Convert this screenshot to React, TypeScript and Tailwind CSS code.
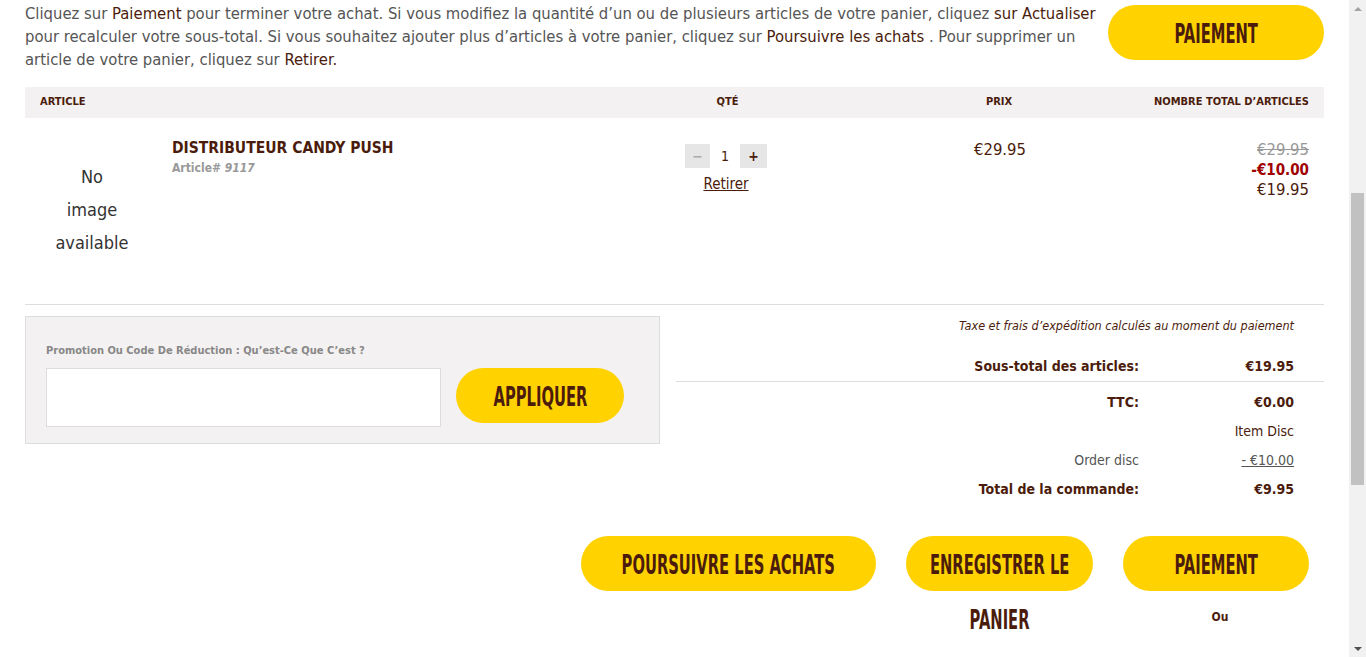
import type { ReactNode } from "react";

const FONT = "font-['Liberation_Sans_Narrow','DejaVu_Sans_Condensed','Liberation_Sans',sans-serif]";
const BROWN = "text-[#4b1c0c]";

// DIN-like condensed caps for the yellow buttons
function Pill({ children, className = "" }: { children: ReactNode; className?: string }) {
  return (
    <button
      className={`flex h-[55px] shrink-0 items-center justify-center rounded-full bg-[#ffd200] text-[26px] font-bold uppercase text-[#4b1c0c] ${className}`}
    >
      <span className="inline-block translate-y-[2px] scale-x-[0.63] whitespace-nowrap">{children}</span>
    </button>
  );
}

function SummaryRow({
  label,
  value,
  labelCls = "font-bold",
  valueCls = "font-bold",
}: {
  label: string;
  value: string;
  labelCls?: string;
  valueCls?: string;
}) {
  return (
    <div className="flex h-[29px] items-center text-[14px]">
      <div className={`w-[463px] text-right ${labelCls}`}>{label}</div>
      <div className={`w-[155px] text-right ${valueCls}`}>{value}</div>
    </div>
  );
}

function Scrollbar() {
  return (
    <div className="flex h-full w-[17px] shrink-0 flex-col items-center bg-[#f1f1f1]">
      <div className="flex h-[17px] items-center justify-center">
        <div className="h-0 w-0 border-x-[4px] border-b-[4px] border-x-transparent border-b-[#a3a3a3]" />
      </div>
      <div className="mt-[176px] h-[292px] w-[13px] bg-[#c1c1c1]" />
      <div className="flex-1" />
      <div className="flex h-[17px] items-center justify-center">
        <div className="h-0 w-0 border-x-[4px] border-t-[4px] border-x-transparent border-t-[#505050]" />
      </div>
    </div>
  );
}

export default function App() {
  return (
    <div className={`flex h-[657px] w-full overflow-hidden bg-white ${FONT} ${BROWN}`}>
      <div className="min-w-0 flex-1 px-[25px]">
        {/* intro + checkout button */}
        <div className="flex items-start gap-1">
          <p className="flex-1 pt-[2px] text-[16.5px] leading-[23px] text-[#555]">
            Cliquez sur <span className={BROWN}>Paiement</span> pour terminer votre achat. Si vous modifiez la
            quantité d’un ou de plusieurs articles de votre panier, cliquez{" "}
            <span className={BROWN}>sur Actualiser</span>
            <br />
            pour recalculer votre sous-total. Si vous souhaitez ajouter plus d’articles à votre panier, cliquez sur{" "}
            <span className={BROWN}>Poursuivre les achats</span> . Pour supprimer un
            <br />
            article de votre panier, cliquez sur <span className={BROWN}>Retirer.</span>
          </p>
          <Pill className="mt-[5px] w-[216px]">Paiement</Pill>
        </div>

        {/* table header */}
        <div className="mt-[16px] flex h-[31px] items-center bg-[#f3f1f1] px-[15px] text-[11px] font-bold uppercase">
          <div className="w-[625px]">Article</div>
          <div className="w-[125px] text-center">Qté</div>
          <div className="w-[290px] pl-[128px] text-center">Prix</div>
          <div className="flex-1 text-right">Nombre total d’articles</div>
        </div>

        {/* item row */}
        <div className="flex h-[187px] border-b border-[#dddddd] px-[15px] pt-[22px]">
          <div className="w-[104px] pt-[20px] text-center text-[18px] leading-[33px] text-[#333]">
            No
            <br />
            image
            <br />
            available
          </div>
          <div className="w-[541px] pl-[28px]">
            <div className="text-[15.5px] font-bold uppercase leading-[16px]">Distributeur Candy Push</div>
            <div className="mt-[3px] text-[12px] font-bold text-[#999]">
              Article# <span className="italic">9117</span>
            </div>
          </div>
          <div className="flex w-[82px] flex-col items-center pt-[4px]">
            <div className="flex h-[24px] text-[14px] font-bold">
              <span className="flex w-[25px] items-center justify-center bg-[#e6e6e6] text-[#aaa]">−</span>
              <span className="flex w-[30px] items-center justify-center bg-white font-normal">1</span>
              <span className="flex w-[27px] items-center justify-center bg-[#e6e6e6]">+</span>
            </div>
            <span className="mt-[5px] text-[15px] underline">Retirer</span>
          </div>
          <div className="w-[290px] pl-[207px] text-[16.5px] leading-[20px]">€29.95</div>
          <div className="flex flex-1 flex-col items-end text-[16.5px] leading-[20px]">
            <span className="text-[#999] line-through">€29.95</span>
            <span className="text-[15px] font-bold text-[#a00000]">-€10.00</span>
            <span>€19.95</span>
          </div>
        </div>

        {/* promo + summary */}
        <div className="mt-[11px] flex">
          <div className="h-[128px] w-[635px] shrink-0 border border-[#dddddd] bg-[#f3f1f1] px-[20px] pt-[26px]">
            <div className="text-[11px] font-bold text-[#888]">
              Promotion Ou Code De Réduction : Qu’est-Ce Que C’est ?
            </div>
            <div className="mt-[8px] flex items-start gap-[15px]">
              <input className="h-[59px] w-[395px] border border-[#dddddd] bg-white outline-none" />
              <Pill className="w-[168px]">Appliquer</Pill>
            </div>
          </div>

          <div className="ml-[16px] flex-1">
            <div className="pr-[30px] pt-[1px] text-right text-[12.5px] italic">
              Taxe et frais d’expédition calculés au moment du paiement
            </div>
            <div className="mt-[16px] border-b border-[#dddddd]">
              <SummaryRow label="Sous-total des articles:" value="€19.95" />
            </div>
            <div className="pt-[6px]">
              <SummaryRow label="TTC:" value="€0.00" />
              <SummaryRow label="" value="Item Disc" valueCls="font-normal" />
              <SummaryRow
                label="Order disc"
                value="- €10.00"
                labelCls="font-normal text-[#555]"
                valueCls="font-normal text-[#555] underline"
              />
              <SummaryRow label="Total de la commande:" value="€9.95" />
            </div>
          </div>
        </div>

        {/* bottom actions */}
        <div className="mt-[32px] flex justify-end gap-[30px] pr-[15px]">
          <Pill className="w-[295px]">Poursuivre les achats</Pill>
          <div className="flex w-[187px] flex-col items-center">
            <Pill className="w-[187px]">Enregistrer le</Pill>
            <span className="inline-block translate-y-[2px] scale-x-[0.63] text-[26px] font-bold uppercase leading-[55px]">
              Panier
            </span>
          </div>
          <div className="flex w-[186px] flex-col items-center">
            <Pill className="w-[186px]">Paiement</Pill>
            <span className="mt-[17px] pl-[8px] text-[12px] font-bold">Ou</span>
          </div>
        </div>
      </div>

      <Scrollbar />
    </div>
  );
}
